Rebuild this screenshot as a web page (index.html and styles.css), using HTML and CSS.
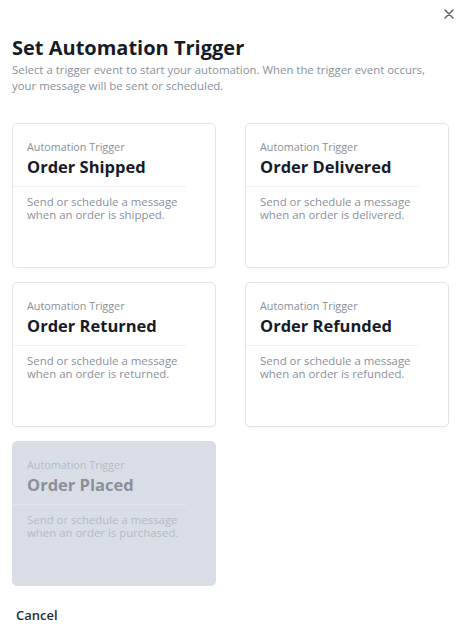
FILE: index.html
```
<!DOCTYPE html>
<html>
<head>
<meta charset="utf-8">
<link rel="stylesheet" href="styles.css">
</head>
<body>
<div class="modal">
  <div class="close-row">
    <button class="close" aria-label="Close">
      <svg width="10" height="10" viewBox="0 0 10 10"><path d="M1 1L9 9M9 1L1 9" stroke="#5b6477" stroke-width="1.5" stroke-linecap="round"/></svg>
    </button>
  </div>
  <h1 class="title">Set Automation Trigger</h1>
  <p class="subtitle">Select a trigger event to start your automation. When the trigger event occurs, your message will be sent or scheduled.</p>
  <div class="grid">
    <div class="card">
      <div class="card-head">
        <div class="label">Automation Trigger</div>
        <div class="name">Order Shipped</div>
      </div>
      <p class="desc">Send or schedule a message when an order is shipped.</p>
    </div>
    <div class="card">
      <div class="card-head">
        <div class="label">Automation Trigger</div>
        <div class="name">Order Delivered</div>
      </div>
      <p class="desc">Send or schedule a message when an order is delivered.</p>
    </div>
    <div class="card">
      <div class="card-head">
        <div class="label">Automation Trigger</div>
        <div class="name">Order Returned</div>
      </div>
      <p class="desc">Send or schedule a message when an order is returned.</p>
    </div>
    <div class="card">
      <div class="card-head">
        <div class="label">Automation Trigger</div>
        <div class="name">Order Refunded</div>
      </div>
      <p class="desc">Send or schedule a message when an order is refunded.</p>
    </div>
    <div class="card disabled">
      <div class="card-head">
        <div class="label">Automation Trigger</div>
        <div class="name">Order Placed</div>
      </div>
      <p class="desc">Send or schedule a message when an order is purchased.</p>
    </div>
  </div>
  <div class="footer">
    <button class="cancel">Cancel</button>
  </div>
</div>
</body>
</html>
```
FILE: styles.css
```
* { box-sizing: border-box; }
html, body { margin: 0; padding: 0; background: #fff; }
body { font-family: "Open Sans", "Noto Sans", sans-serif; color: #1c2130; }
.modal { width: 460px; height: 632px; padding: 0 12px; }
.close-row { display: flex; justify-content: flex-end; height: 25px; padding-top: 8px; margin-right: -7px; }
.close { border: 0; background: none; padding: 0; width: 12px; height: 12px; display: flex; align-items: center; justify-content: center; cursor: pointer; }
.title { margin: 10px 0 0; font-size: 20px; font-weight: 700; line-height: 26px; color: #161b28; }
.subtitle { margin: 1px 0 0; font-size: 11.4px; line-height: 16px; color: #8a909b; }
.grid { margin-top: 29px; display: grid; grid-template-columns: 204px 204px; column-gap: 29px; row-gap: 14px; }
.card { height: 145px; border: 1px solid #e2e6ec; border-radius: 5px; background: #fff; box-shadow: 0 1px 2px rgba(30,40,60,0.04); }
.card-head { padding: 16px 0 9px 14px; margin-right: 29px; border-bottom: 1px solid #eef0f3; }
.label { font-size: 10.8px; line-height: 14px; color: #8a909b; }
.name { font-size: 16.5px; line-height: 21px; font-weight: 700; color: #161b28; margin-top: 2px; }
.desc { margin: 0; padding: 8px 14px 0; font-size: 11.4px; line-height: 13px; color: #8a909b; }
.card.disabled { background: #d9dee6; border-color: #d9dee6; box-shadow: none; }
.card.disabled .card-head { border-bottom-color: #e4e8ee; }
.card.disabled .label, .card.disabled .desc { color: #b4bbc6; }
.card.disabled .name { color: #8a909b; }
.footer { padding: 17px 4px 0; }
.cancel { border: 0; background: none; padding: 0; font-family: "Open Sans", sans-serif; font-size: 13px; font-weight: 600; color: #252b3d; cursor: pointer; }
```
